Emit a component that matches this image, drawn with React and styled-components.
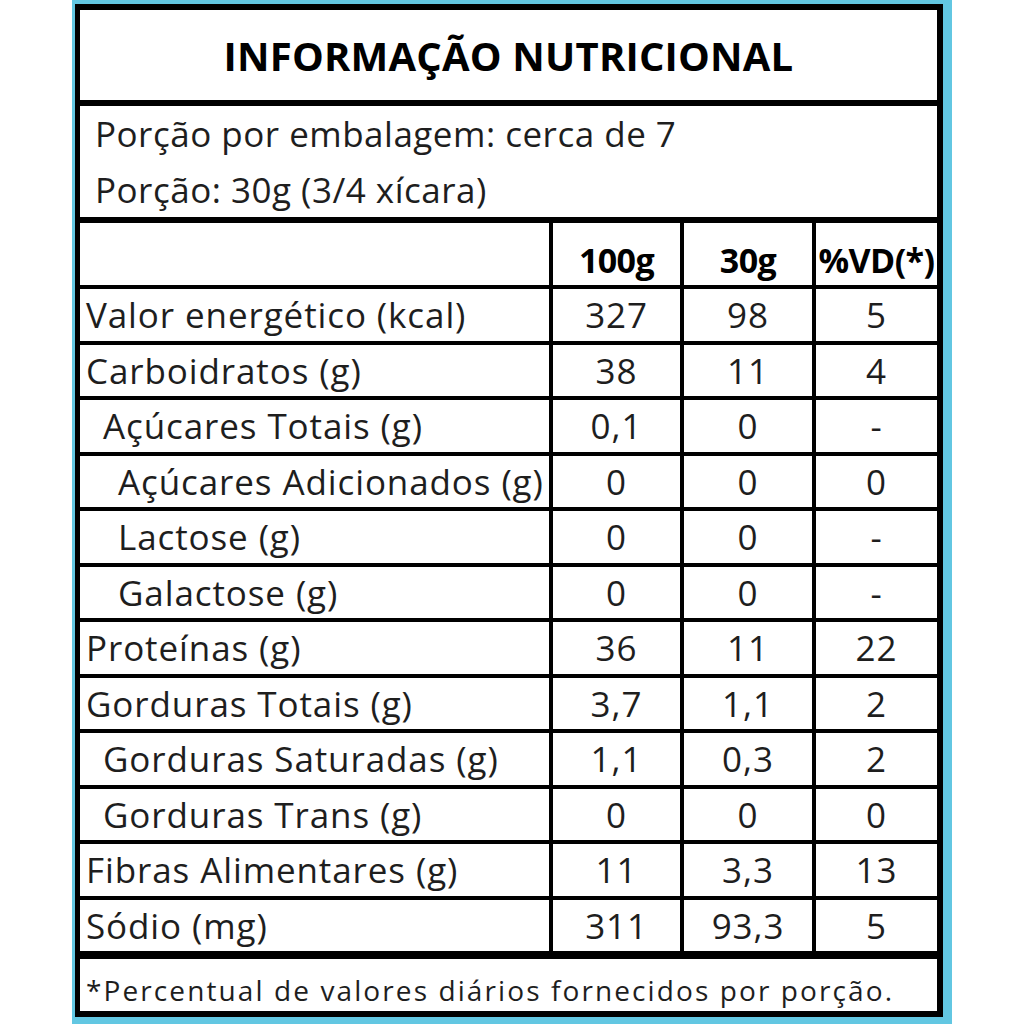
import React from 'react';
import styled, { createGlobalStyle } from 'styled-components';

const Global = createGlobalStyle`
  html, body { margin: 0; padding: 0; background: #ffffff; }
  body { font-family: "Open Sans", Lato, sans-serif; }
  * { box-sizing: border-box; }
`;

const Page = styled.div`
  width: 1024px;
  height: 1024px;
  background: #ffffff;
  padding-left: 72px;
`;

const Outline = styled.div`
  width: 880px;
  height: 1024px;
  background: #62c7e2;
  padding: 4px 9px 7px 3px;
`;

const Frame = styled.div`
  width: 868px;
  height: 1013px;
  background: #ffffff;
  border-style: solid;
  border-color: #000;
  border-width: 6px 6px 6px 5px;
  display: flex;
  flex-direction: column;
  color: #1e1e1e;
`;

const Title = styled.div`
  height: 96px;
  border-bottom: 6px solid #000;
  display: flex;
  align-items: center;
  justify-content: center;
  font-weight: 700;
  font-size: 40px;
  color: #000;
  letter-spacing: 0.2px;
`;

const Serving = styled.div`
  height: 117px;
  border-bottom: 6px solid #000;
  display: flex;
  flex-direction: column;
  justify-content: center;
  padding-left: 15px;
  font-size: 35px;
  letter-spacing: 0.5px;
  line-height: 56px;
`;

const Row = styled.div`
  display: grid;
  grid-template-columns: 473px 131px 132px 121px;
  height: ${p => p.$h}px;
  border-bottom: ${p => p.$thick ? 8 : 4}px solid #000;
`;

const Cell = styled.div`
  display: flex;
  align-items: ${p => p.$head ? 'flex-end' : 'center'};
  justify-content: ${p => p.$label ? 'flex-start' : 'center'};
  padding-left: ${p => p.$indent || 0}px;
  padding-bottom: ${p => p.$head ? 2 : 0}px;
  border-right: ${p => p.$end ? 0 : 4}px solid #000;
  font-size: ${p => p.$head ? 34 : 35}px;
  font-weight: ${p => p.$head ? 700 : 400};
  letter-spacing: ${p => p.$head ? -0.6 : 0.9}px;
  white-space: nowrap;
  overflow: visible;
  color: ${p => p.$head ? '#000' : '#1e1e1e'};
`;

const Footer = styled.div`
  flex: 1;
  display: flex;
  align-items: center;
  padding-left: 6px;
  padding-top: 9px;
  font-size: 28px;
  letter-spacing: 2.1px;
  white-space: nowrap;
`;

const rows = [
  { label: 'Valor energético (kcal)', indent: 0, v: ['327', '98', '5'] },
  { label: 'Carboidratos (g)', indent: 0, v: ['38', '11', '4'] },
  { label: 'Açúcares Totais (g)', indent: 1, v: ['0,1', '0', '-'] },
  { label: 'Açúcares Adicionados (g)', indent: 2, v: ['0', '0', '0'] },
  { label: 'Lactose (g)', indent: 2, v: ['0', '0', '-'] },
  { label: 'Galactose (g)', indent: 2, v: ['0', '0', '-'] },
  { label: 'Proteínas (g)', indent: 0, v: ['36', '11', '22'] },
  { label: 'Gorduras Totais (g)', indent: 0, v: ['3,7', '1,1', '2'] },
  { label: 'Gorduras Saturadas (g)', indent: 1, v: ['1,1', '0,3', '2'] },
  { label: 'Gorduras Trans (g)', indent: 1, v: ['0', '0', '0'] },
  { label: 'Fibras Alimentares (g)', indent: 0, v: ['11', '3,3', '13'] },
  { label: 'Sódio (mg)', indent: 0, v: ['311', '93,3', '5'] },
];

const indents = [6, 23, 38];

export default function App() {
  return (
    <>
      <Global />
      <Page>
        <Outline>
          <Frame>
            <Title>INFORMAÇÃO NUTRICIONAL</Title>
            <Serving>
              <div>Porção por embalagem: cerca de 7</div>
              <div>Porção: 30g (3/4 xícara)</div>
            </Serving>
            <Row $h={66}>
              <Cell $label $head />
              <Cell $head>100g</Cell>
              <Cell $head>30g</Cell>
              <Cell $head $end>%VD(*)</Cell>
            </Row>
            {rows.map((r, i) => {
              const last = i === rows.length - 1;
              return (
                <Row key={r.label} $h={last ? 59.5 : 55.5} $thick={last}>
                  <Cell $label $indent={indents[r.indent]}>{r.label}</Cell>
                  <Cell>{r.v[0]}</Cell>
                  <Cell>{r.v[1]}</Cell>
                  <Cell $end>{r.v[2]}</Cell>
                </Row>
              );
            })}
            <Footer>*Percentual de valores diários fornecidos por porção.</Footer>
          </Frame>
        </Outline>
      </Page>
    </>
  );
}
